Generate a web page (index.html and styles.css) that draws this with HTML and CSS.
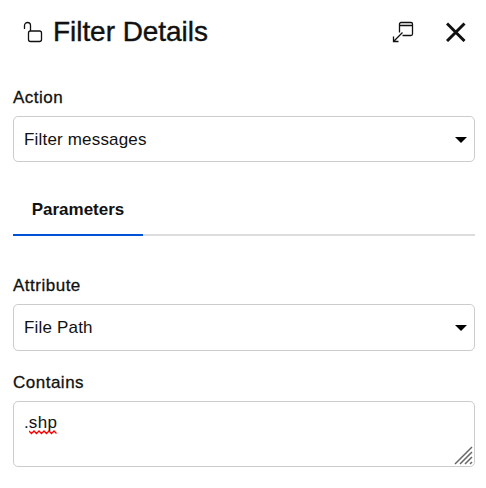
FILE: index.html
```html
<!DOCTYPE html>
<html lang="en">
<head>
    <meta charset="UTF-8">
    <meta name="viewport" content="width=device-width, initial-scale=1.0">
    <title>Filter Details</title>
    <link rel="stylesheet" href="styles.css">
</head>
<body>

    <header>
        <svg class="lock" width="20" height="22" viewBox="0 0 20 22">
            <path d="M1.500 8V4.500a3 3 0 0 1 6 0V10"/>
            <rect x="5.500" y="10" width="13" height="10.500" rx="2"/>
        </svg>
        <h1>Filter Details</h1>
        <button class="expand" aria-label="Expand">
            <svg width="22" height="22" viewBox="0 0 22 22">
                <path d="M7.500 11.500V3a1.500 1.500 0 0 1 1.500-1.500h10a1.500 1.500 0 0 1 1.500 1.500v10a1.500 1.500 0 0 1-1.500 1.500h-8.500M7.500 4.500h13"/>
                <path d="M10.500 11.500L1.500 20.500M1.500 15.500v5h5"/>
            </svg>
        </button>
        <button class="close" aria-label="Close">
            <svg width="20" height="20" viewBox="0 0 20 20">
                <path d="M1 1.500l17.500 17.500M18.500 1.500l-17.500 17.500"/>
            </svg>
        </button>
    </header>

    <main>
        <label for="action">Action</label>
        <div class="select">
            <select id="action">
                <option>Filter messages</option>
            </select>
            <span class="arrow"></span>
        </div>

        <nav>
            <a class="active">Parameters</a>
        </nav>

        <label for="attribute">Attribute</label>
        <div class="select attribute">
            <select id="attribute">
                <option>File Path</option>
            </select>
            <span class="arrow"></span>
        </div>

        <label id="contains">Contains</label>
        <div class="textarea" role="textbox" aria-labelledby="contains">
            .<span class="typo">shp<svg width="28" height="5" viewBox="0 0 28 5"><path d="M0 1l2.500 2.500 2.500-2.500 2.500 2.500 2.500-2.500 2.500 2.500 2.500-2.500 2.500 2.500 2.500-2.500 2.500 2.500 2.500-2.500 2.500 2.500"/></svg></span>
            <svg class="grip" width="19" height="19" viewBox="0 0 19 19">
                <path d="M1 18L18 1M6 18L18 6M11 18l7-7M16 18l2-2"/>
            </svg>
        </div>
    </main>

</body>
</html>
```
FILE: styles.css
```css
* {
    box-sizing: border-box;
}

body {
    margin: 0;
    padding: 0 11px 0 13px;
    background-color: #fff;
    color: #111;
    font-family: "Liberation Sans", Arial, sans-serif;
    font-size: 17px;
}

header {
    display: flex;
    align-items: center;
    height: 64px;
    padding: 0 9px 0 10px;
}

svg {
    display: block;
    fill: none;
    stroke: #111;
}

.lock {
    stroke-width: 1.3;
}

h1 {
    margin: 0 auto 0 10px;
    font-size: 28px;
    font-weight: normal;
    line-height: 36px;
    letter-spacing: -0.05px;
    -webkit-text-stroke: 0.4px #111;
}

button {
    padding: 0;
    border: 0;
    background: none;
}

.expand {
    margin-right: 32px;
}

.expand svg {
    stroke-width: 1.3;
}

.close svg {
    stroke-width: 3;
}

main {
    padding-top: 22px;
}

label {
    display: block;
    height: 30px;
    line-height: 24px;
    letter-spacing: 0.5px;
    -webkit-text-stroke: 0.3px #111;
}

.select {
    position: relative;
    height: 46px;
}

.select select {
    width: 100%;
    height: 100%;
    padding: 0 10px;
    appearance: none;
    border: 1px solid #ccc;
    border-radius: 5px;
    background-color: #fff;
    color: #111;
    font: inherit;
    letter-spacing: 0.18px;
}

.arrow {
    position: absolute;
    top: 21px;
    right: 8px;
    border: 6px solid transparent;
    border-top-color: #000;
    border-bottom: 0;
}

nav {
    display: flex;
    height: 74px;
    margin-bottom: 38px;
    align-items: flex-end;
    border-bottom: 2px solid #ddd;
}

nav a {
    width: 130px;
    height: 37px;
    margin-bottom: -2px;
    border-bottom: 2px solid #0052d6;
    font-weight: bold;
    line-height: 22px;
    text-align: center;
}

.attribute {
    height: 47px;
    margin-bottom: 20px;
}

.textarea {
    position: relative;
    height: 66px;
    padding: 11px 10px;
    border: 1px solid #ccc;
    border-radius: 5px;
    line-height: 20px;
}

.typo {
    position: relative;
    letter-spacing: 0.4px;
}

.typo svg {
    position: absolute;
    left: 0;
    bottom: -3px;
    stroke: #f00;
    stroke-width: 1.3;
}

.grip {
    position: absolute;
    right: 1px;
    bottom: 1px;
    stroke: #666;
    stroke-width: 1.5;
}
```
